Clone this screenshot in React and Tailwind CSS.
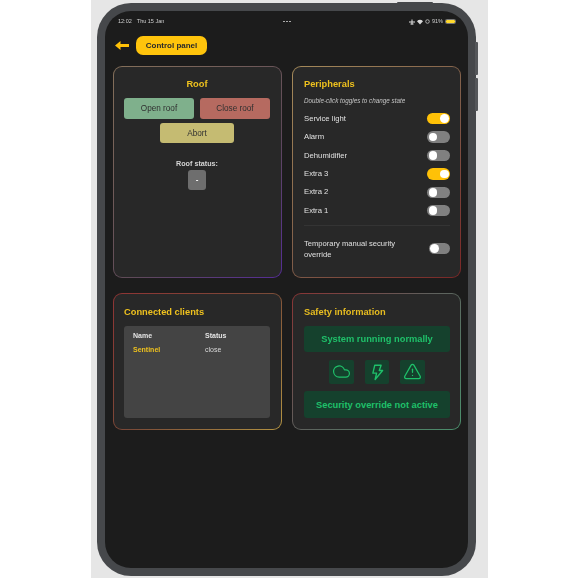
import React from "react";
import { Cloud, TriangleAlert } from "lucide-react";

function Card({ gradient, pad, children }) {
  return (
    <div className={`rounded-[9px] p-px min-w-0 ${gradient}`}>
      <div className={`h-full rounded-[8px] bg-[#282828] pt-[11px] pb-[11px] flex flex-col ${pad}`}>{children}</div>
    </div>
  );
}

function Toggle({ on, wide }) {
  return (
    <div className={`${wide ? "w-[21.5px]" : "w-[23px]"} h-[11.5px] shrink-0 rounded-full flex items-center px-[1.5px] ${on ? "bg-[#ffc107] justify-end" : "bg-[#808080] justify-start"}`}>
      <div className="w-[8.5px] h-[8.5px] rounded-full bg-white" />
    </div>
  );
}

function Row({ label, on }) {
  return (
    <div className="h-[18.4px] flex items-center justify-between text-[7.7px] text-[#e0e0e0]">
      <span>{label}</span>
      <Toggle on={on} />
    </div>
  );
}

function IconBox({ children }) {
  return <div className="w-[24.5px] h-[24px] rounded-[2px] bg-[#15412d] flex items-center justify-center text-[#1fc06a]">{children}</div>;
}

export default function App() {
  return (
    <div className="w-[579px] h-[579px] bg-white overflow-hidden font-['Liberation_Sans',Arial,sans-serif]">
      <div className="ml-[91px] w-[397px] h-[578px] bg-[#e6e6e6] pt-[3px] pl-[6px]">
        <div className="relative w-[379px] h-[573px] rounded-[34px] bg-[#46484b] p-[8px] blur-[0.3px]">
          <div className="absolute left-[300px] -top-[1.5px] w-[36px] h-[3px] rounded-t-[1px] bg-[#46484b]" />
          <div className="absolute -right-[2px] top-[38.5px] w-[3px] h-[33px] rounded-r-[1px] bg-[#55575a]" />
          <div className="absolute -right-[2px] top-[75px] w-[3px] h-[33px] rounded-r-[1px] bg-[#55575a]" />
          <div className="h-full rounded-[26px] bg-[#1c1c1c] px-[8px] overflow-hidden">
            <div className="h-[18px] pt-[3px] flex items-center justify-between text-[5.5px] text-[#d0d0d0] px-[5px]">
              <div className="flex gap-[5px] w-[60px]"><span>12:02</span><span className="whitespace-nowrap">Thu 15 Jan</span></div>
              <div className="flex gap-[1.5px]">
                <div className="w-[1.8px] h-[1.8px] rounded-full bg-[#c0c0c0]" />
                <div className="w-[1.8px] h-[1.8px] rounded-full bg-[#c0c0c0]" />
                <div className="w-[1.8px] h-[1.8px] rounded-full bg-[#c0c0c0]" />
              </div>
              <div className="flex items-center gap-[2px] w-[60px] justify-end -mr-[1px]">
                <svg width="6" height="6" viewBox="0 0 6 6"><path d="M0 3h6M3 .5v5M1.5 5h3" stroke="#e0e0e0" strokeWidth="1" fill="none" /></svg>
                <svg width="6" height="6" viewBox="0 0 6 6"><path d="M0 2.2C1.8.3 4.2.3 6 2.2L3 5.5z" fill="#d8d8d8" /></svg>
                <svg width="5" height="5" viewBox="0 0 5 5"><circle cx="2.5" cy="2.5" r="1.8" stroke="#c8c8c8" strokeWidth=".8" fill="none" /></svg>
                <span>91%</span>
                <div className="w-[11px] h-[5.5px] rounded-[1.5px] border border-[#777] flex items-center"><div className="w-full h-full rounded-[1px] bg-[#ffd92e]" /></div>
              </div>
            </div>

            <div className="mt-[6.5px] h-[19.5px] flex items-center gap-[7px] pl-[2px]">
              <svg width="14" height="9" viewBox="0 0 14 9"><path d="M0 4.5 5.5 0v3H14v3H5.5v3z" fill="#ffc107" /></svg>
              <div className="h-[19.5px] w-[71px] pt-[1.5px] rounded-[7px] bg-[#ffc40c] flex items-center justify-center text-[8px] font-bold text-[#2a2a2a]">Control panel</div>
            </div>

            <div className="mt-[11px] grid grid-cols-[169px_169px] grid-rows-[212px_137px] gap-x-[10px] gap-y-[15px]">
              <Card pad="pl-[10px] pr-[11px]" gradient="bg-[linear-gradient(135deg,#85705a,#5f4a58_60%,#552c96)]">
                <div className="flex flex-col items-center">
                  <h2 className="h-[14px] flex items-center text-[9.3px] font-bold text-[#eec11e]">Roof</h2>
                  <div className="mt-[6px] flex gap-[5.5px] text-[8.2px] text-[#303030]">
                    <button className="w-[70.5px] h-[20.5px] pt-[1.5px] rounded-[3px] bg-[#7fb08c]">Open roof</button>
                    <button className="w-[70.5px] h-[20.5px] pt-[1.5px] rounded-[3px] bg-[#b66a60]">Close roof</button>
                  </div>
                  <button className="mt-[4.5px] w-[73.5px] h-[20px] pt-[1.5px] rounded-[3px] bg-[#c5bb72] text-[8.2px] text-[#303030]">Abort</button>
                  <div className="mt-[15.5px] text-[7.2px] font-bold text-[#d4d4d4]">Roof status:</div>
                  <div className="mt-[0.5px] w-[17.5px] h-[20px] rounded-[3px] bg-[#6e6e6e] flex items-center justify-center text-[8px] font-bold text-white">-</div>
                </div>
              </Card>

              <Card pad="pl-[11px] pr-[10px]" gradient="bg-[linear-gradient(135deg,#a58a5a,#7d5a48_55%,#7a2626)]">
                <h2 className="mt-[1px] h-[12px] flex items-center text-[9.3px] font-bold text-[#eec11e]">Peripherals</h2>
                <p className="mt-[4.5px] h-[11px] flex items-center text-[6.3px] italic text-[#c4c4c4]">Double-click toggles to change state</p>
                <div className="mt-[3px]">
                  <Row label="Service light" on />
                  <Row label="Alarm" />
                  <Row label="Dehumidifier" />
                  <Row label="Extra 3" on />
                  <Row label="Extra 2" />
                  <Row label="Extra 1" />
                </div>
                <div className="mt-[5.5px] h-px bg-[#343434]" />
                <div className="mt-[9.5px] flex items-center justify-between">
                  <span className="w-[110px] pt-[2px] text-[7.6px] leading-[11.5px] text-[#e0e0e0]">Temporary manual security override</span>
                  <Toggle wide />
                </div>
              </Card>

              <Card pad="pl-[10px] pr-[11px]" gradient="bg-[linear-gradient(135deg,#8f3434,#7a4a38_50%,#b39342)]">
                <h2 className="h-[16px] flex items-center text-[9.3px] font-bold text-[#eec11e]">Connected clients</h2>
                <div className="mt-[4.5px] flex-1 rounded-[3px] bg-[#444444] px-[9px] pt-[3.5px] text-[7px]">
                  <div className="h-[14px] grid grid-cols-[72px_1fr] items-center font-bold text-[#e4e4e4]"><span>Name</span><span>Status</span></div>
                  <div className="h-[14px] grid grid-cols-[72px_1fr] items-center"><span className="font-bold text-[#eec11e]">Sentinel</span><span className="text-[#d8d8d8]">close</span></div>
                </div>
              </Card>

              <Card pad="pl-[11px] pr-[10px]" gradient="bg-[linear-gradient(135deg,#8a3434,#5f5f5c_45%,#4a8f6c)]">
                <h2 className="h-[16px] flex items-center text-[9.3px] font-bold text-[#e8bd20]">Safety information</h2>
                <div className="mt-[4.5px] h-[26.5px] pt-[1.5px] rounded-[3px] bg-[#15412d] flex items-center justify-center text-[9.3px] font-bold text-[#1fc06a]">System running normally</div>
                <div className="mt-[7.5px] flex justify-center gap-[11px]">
                  <IconBox><Cloud size={19} strokeWidth={1.5} /></IconBox>
                  <IconBox>
                    <svg width="18" height="18" viewBox="0 0 24 24" fill="none" stroke="currentColor" strokeWidth="1.8" strokeLinejoin="round"><path d="M9 3h8.5L15 10h4.5L9.5 22l2-8.5H6.5z" /></svg>
                  </IconBox>
                  <IconBox><TriangleAlert size={19} strokeWidth={1.6} /></IconBox>
                </div>
                <div className="mt-[7.5px] h-[26.5px] pt-[2.5px] rounded-[3px] bg-[#15412d] flex items-center justify-center text-[9.3px] font-bold text-[#1fc06a]">Security override not active</div>
              </Card>
            </div>
          </div>
        </div>
      </div>
    </div>
  );
}
